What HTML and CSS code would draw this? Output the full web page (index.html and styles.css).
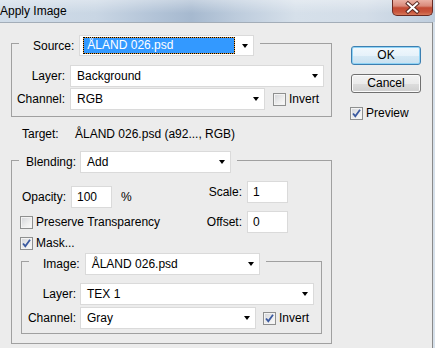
FILE: index.html
```html
<!DOCTYPE html>
<html lang="en">

<head>
  <meta charset="UTF-8">
  <title>Apply Image</title>
  <link rel="stylesheet" href="styles.css">
</head>

<body>
  <div class="titlebar">
    <span class="title">Apply Image</span>
    <span class="close">
      <svg width="39" height="15" viewBox="0 0 39 15">
        <path d="M15 3.5 L24 11.5 M24 3.5 L15 11.5" stroke="#5a2a24" stroke-width="4" stroke-linecap="square" />
        <path d="M15 3.5 L24 11.5 M24 3.5 L15 11.5" stroke="#fff" stroke-width="2" stroke-linecap="square" />
      </svg>
    </span>
  </div>

  <div class="dialog">
    <div class="main">
      <!-- source -->
      <fieldset class="group source">
        <legend>
          <div class="head">
            <span>Source:</span>
            <span class="select w175 h21">
              <span class="focus"><span class="hl">ÅLAND 026.psd</span></span>
              <i class="arrow"></i>
            </span>
          </div>
        </legend>
        <div class="row">
          <span class="lbl w53">Layer:</span>
          <span class="select w254">Background<i class="arrow"></i></span>
        </div>
        <div class="row gap1">
          <span class="lbl w53">Channel:</span>
          <span class="select w195">RGB<i class="arrow"></i></span>
          <span class="check ml8"><span class="box"></span>Invert</span>
        </div>
      </fieldset>

      <div class="target">
        <span class="lbl-left">Target:</span>
        <span>ÅLAND 026.psd (a92..., RGB)</span>
      </div>

      <!-- blending -->
      <fieldset class="group blending">
        <legend>
          <div class="head">
            <span>Blending:</span>
            <span class="select w151">Add<i class="arrow"></i></span>
          </div>
        </legend>
        <div class="blend-top">
          <div class="blend-left">
            <div class="row">
              <span class="opacity-lbl">Opacity:</span>
              <span class="input">100</span>
              <span class="pct">%</span>
            </div>
            <span class="check mt8"><span class="box"></span>Preserve Transparency</span>
            <span class="check mt8"><span class="box on"></span>Mask...</span>
          </div>
          <div class="blend-right">
            <div class="row">
              <span>Scale:</span>
              <span class="input">1</span>
            </div>
            <div class="row mt8">
              <span>Offset:</span>
              <span class="input">0</span>
            </div>
          </div>
        </div>

        <!-- mask -->
        <fieldset class="group mask">
          <legend>
            <div class="head">
              <span>Image:</span>
              <span class="select w175">ÅLAND 026.psd<i class="arrow"></i></span>
            </div>
          </legend>
          <div class="row">
            <span class="lbl w54">Layer:</span>
            <span class="select w234">TEX 1<i class="arrow"></i></span>
          </div>
          <div class="row gap2">
            <span class="lbl w54">Channel:</span>
            <span class="select w176">Gray<i class="arrow"></i></span>
            <span class="check ml7"><span class="box on"></span>Invert</span>
          </div>
        </fieldset>
      </fieldset>
    </div>

    <div class="side">
      <span class="btn btn-default">OK</span>
      <span class="btn btn-cancel">Cancel</span>
      <span class="check preview"><span class="box on"></span>Preview</span>
    </div>
  </div>
</body>

</html>
```

FILE: styles.css
```css
* {
  box-sizing: border-box;
}

html,
body {
  margin: 0;
  padding: 0;
}

body {
  width: 435px;
  height: 348px;
  overflow: hidden;
  font: 12px "Liberation Sans", Arial, sans-serif;
  color: #000;
  background: #d6e0ea;
}

/* title bar */
.titlebar {
  height: 22px;
  display: flex;
  justify-content: space-between;
  align-items: flex-start;
  background:
    linear-gradient(to bottom, rgba(255, 255, 255, .35), rgba(255, 255, 255, 0) 60%),
    linear-gradient(to right, #d0dce8 0%, #c9d6e4 22%, #b2c3d7 36%, #a6b9cf 44%, #bccbdc 54%, #d6e0ea 68%, #d3dde8 84%, #bfcede 100%);
}

.title {
  line-height: 22px;
  white-space: nowrap;
}

.close {
  width: 41px;
  height: 16px;
  margin-right: 2px;
  border: 1px solid #6a2a22;
  border-top: none;
  border-radius: 0 0 5px 5px;
  background: linear-gradient(to bottom, #eab1a4 0%, #d98a7a 40%, #c24a33 52%, #c9563d 80%, #d77a5c 100%);
  display: flex;
}

/* dialog */
.dialog {
  width: 433px;
  height: 326px;
  display: flex;
  background: #ececec;
  border-top: 1px solid #a3adb8;
  border-right: 1px solid #8a8a8a;
}

.main {
  width: 332px;
  padding: 8px 0 0 11px;
}

.side {
  display: flex;
  flex-direction: column;
  align-items: flex-start;
  margin-left: 19px;
  padding-top: 23px;
}

/* group boxes */
.group {
  margin: 0;
  padding: 0;
  min-width: 0;
  border: 1px solid #a0a0a0;
}

.group legend {
  margin-left: 7px;
  padding: 4px 6px 0 14px;
}

.head {
  display: flex;
  align-items: center;
  gap: 5px;
}

.source {
  width: 321px;
  padding: 9px 0 6px 0;
}

.blending {
  width: 321px;
  padding: 8px 0 9px 0;
}

.blending > legend {
  padding-left: 7px;
}

.blending > legend .head {
  gap: 4px;
}

.mask {
  width: 301px;
  margin: -3px 0 0 9px;
  padding: 8px 0 4px 0;
}

.mask > legend {
  padding-top: 6px;
}

/* rows */
.row {
  display: flex;
  align-items: center;
  height: 22px;
}

.gap1 {
  margin-top: 1px;
}

.gap2 {
  margin-top: 2px;
}

.mt8 {
  margin-top: 8px;
}

.lbl {
  text-align: right;
  flex-shrink: 0;
}

.w53 {
  width: 53px;
  margin-right: 5px;
}

.w54 {
  width: 54px;
  margin-right: 4px;
}

/* dropdowns and fields */
.select {
  display: flex;
  align-items: center;
  justify-content: space-between;
  height: 22px;
  padding: 0 5px 0 6px;
  background: #fff;
  border: 1px solid #dadada;
  white-space: nowrap;
}

.h21 {
  height: 21px;
  padding-left: 3px;
}

.w151 { width: 151px; }
.w175 { width: 175px; }
.w176 { width: 176px; }
.w195 { width: 195px; }
.w234 { width: 234px; }
.w254 { width: 254px; }

.arrow {
  width: 0;
  height: 0;
  border-left: 3.5px solid transparent;
  border-right: 3.5px solid transparent;
  border-top: 4px solid #000;
}

.focus {
  display: block;
  padding: 1px;
  background: #e39a3c;
}

.hl {
  display: block;
  width: 150px;
  height: 15px;
  line-height: 15px;
  padding-left: 3px;
  color: #fff;
  background: #3399ff;
  outline: 1px dotted #000;
}

.input {
  width: 41px;
  height: 22px;
  line-height: 20px;
  padding-left: 5px;
  background: #fff;
  border: 1px solid #dadada;
}

.target {
  display: flex;
  height: 14px;
  line-height: 14px;
  margin: 10px 0 6px 11px;
}

.lbl-left {
  width: 53px;
}

/* blending body */
.blend-top {
  display: flex;
  padding-left: 8px;
}

.blend-left {
  display: flex;
  flex-direction: column;
  align-items: flex-start;
  margin-top: 5px;
}

.opacity-lbl {
  padding-left: 2px;
  margin-right: 5px;
}

.pct {
  margin-left: 9px;
}

.blend-right {
  margin-left: auto;
  margin-right: 43px;
}

.blend-right .row {
  justify-content: flex-end;
  gap: 5px;
}

/* checkboxes */
.check {
  display: flex;
  align-items: center;
  height: 13px;
  line-height: 13px;
  white-space: nowrap;
}

.ml8 {
  margin-left: 8px;
}

.ml7 {
  margin-left: 7px;
}

.box {
  width: 13px;
  height: 13px;
  margin-right: 3px;
  flex-shrink: 0;
  border: 1px solid #8e8f8f;
  background: linear-gradient(135deg, #d2d4d8 0%, #eeeeee 60%, #fbfbfb 100%);
  box-shadow: inset 0 0 0 1px #f3f3f3;
}

.box.on {
  background:
    url("data:image/svg+xml;utf8,<svg xmlns='http://www.w3.org/2000/svg' width='11' height='11'><path d='M2 5.5 L4.3 8.2 L9 1.8' fill='none' stroke='%233b5aa0' stroke-width='1.8'/></svg>") center / 11px 11px no-repeat,
    linear-gradient(135deg, #d2d4d8 0%, #eeeeee 60%, #fbfbfb 100%);
}

/* buttons */
.btn {
  width: 70px;
  height: 19px;
  line-height: 17px;
  text-align: center;
  border-radius: 3px;
}

.btn-default {
  border: 1px solid #3c7fb1;
  box-shadow: inset 0 0 0 1px #8fd3f5;
  background: linear-gradient(to bottom, #f1f8fd 0%, #e6f2fa 50%, #d6e9f5 51%, #c9e1f1 100%);
}

.btn-cancel {
  margin-top: 9px;
  border: 1px solid #707070;
  box-shadow: inset 0 0 0 1px #fbfbfb;
  background: linear-gradient(to bottom, #f2f2f2 0%, #ebebeb 50%, #dddddd 51%, #cfcfcf 100%);
}

.preview {
  margin: 14px 0 0 -1px;
}
```
